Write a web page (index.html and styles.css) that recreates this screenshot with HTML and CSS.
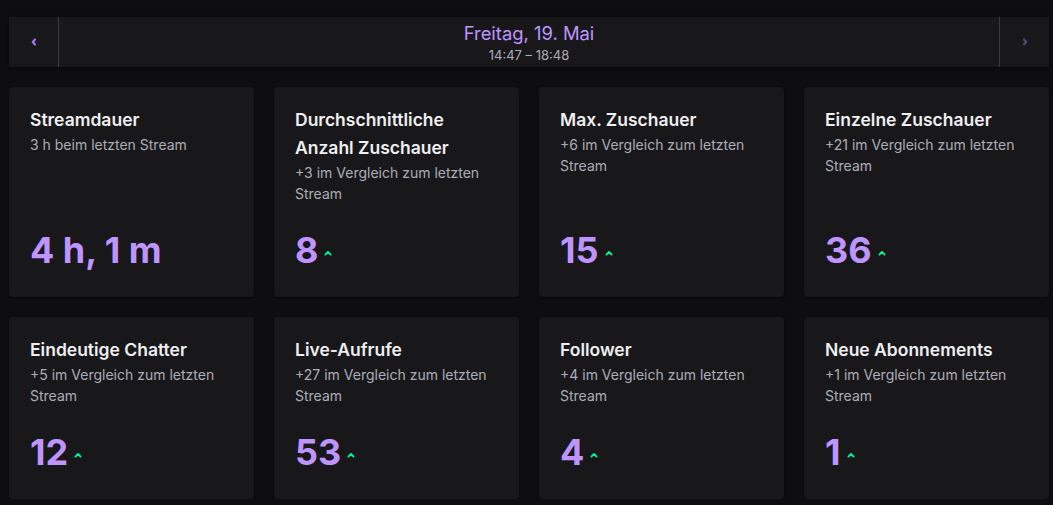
FILE: index.html
```html
<!DOCTYPE html>
<html lang="de">
<head>
<meta charset="utf-8">
<link rel="stylesheet" href="styles.css">
</head>
<body>
<div class="page">
  <div class="datebar">
    <button class="nav nav-prev" aria-label="Zurück">
      <svg width="10" height="10" viewBox="0 0 10 10"><path d="M6 2.6 L3.8 5 L6 7.4" fill="none" stroke="currentColor" stroke-width="2.2" stroke-linecap="round" stroke-linejoin="round"/></svg>
    </button>
    <div class="date">
      <div class="date-title">Freitag, 19. Mai</div>
      <div class="date-time">14:47 – 18:48</div>
    </div>
    <button class="nav nav-next" aria-label="Weiter">
      <svg width="10" height="10" viewBox="0 0 10 10"><path d="M4 2.6 L6.2 5 L4 7.4" fill="none" stroke="currentColor" stroke-width="2.2" stroke-linecap="round" stroke-linejoin="round"/></svg>
    </button>
  </div>

  <div class="grid">
    <div class="card">
      <div class="card-title">Streamdauer</div>
      <div class="card-sub">3 h beim letzten Stream</div>
      <div class="card-value"><span class="num">4 h, 1 m</span></div>
    </div>
    <div class="card">
      <div class="card-title">Durchschnittliche Anzahl Zuschauer</div>
      <div class="card-sub">+3 im Vergleich zum letzten Stream</div>
      <div class="card-value"><span class="num">8</span><svg class="up" width="10" height="8" viewBox="0 0 10 8"><path d="M2.4 5.6 L5 3 L7.6 5.6" fill="none" stroke="currentColor" stroke-width="1.9" stroke-linecap="round" stroke-linejoin="round"/></svg></div>
    </div>
    <div class="card">
      <div class="card-title">Max. Zuschauer</div>
      <div class="card-sub">+6 im Vergleich zum letzten Stream</div>
      <div class="card-value"><span class="num">15</span><svg class="up" width="10" height="8" viewBox="0 0 10 8"><path d="M2.4 5.6 L5 3 L7.6 5.6" fill="none" stroke="currentColor" stroke-width="1.9" stroke-linecap="round" stroke-linejoin="round"/></svg></div>
    </div>
    <div class="card">
      <div class="card-title">Einzelne Zuschauer</div>
      <div class="card-sub">+21 im Vergleich zum letzten Stream</div>
      <div class="card-value"><span class="num">36</span><svg class="up" width="10" height="8" viewBox="0 0 10 8"><path d="M2.4 5.6 L5 3 L7.6 5.6" fill="none" stroke="currentColor" stroke-width="1.9" stroke-linecap="round" stroke-linejoin="round"/></svg></div>
    </div>
    <div class="card">
      <div class="card-title">Eindeutige Chatter</div>
      <div class="card-sub">+5 im Vergleich zum letzten Stream</div>
      <div class="card-value"><span class="num">12</span><svg class="up" width="10" height="8" viewBox="0 0 10 8"><path d="M2.4 5.6 L5 3 L7.6 5.6" fill="none" stroke="currentColor" stroke-width="1.9" stroke-linecap="round" stroke-linejoin="round"/></svg></div>
    </div>
    <div class="card">
      <div class="card-title">Live-Aufrufe</div>
      <div class="card-sub">+27 im Vergleich zum letzten Stream</div>
      <div class="card-value"><span class="num">53</span><svg class="up" width="10" height="8" viewBox="0 0 10 8"><path d="M2.4 5.6 L5 3 L7.6 5.6" fill="none" stroke="currentColor" stroke-width="1.9" stroke-linecap="round" stroke-linejoin="round"/></svg></div>
    </div>
    <div class="card">
      <div class="card-title">Follower</div>
      <div class="card-sub">+4 im Vergleich zum letzten Stream</div>
      <div class="card-value"><span class="num">4</span><svg class="up" width="10" height="8" viewBox="0 0 10 8"><path d="M2.4 5.6 L5 3 L7.6 5.6" fill="none" stroke="currentColor" stroke-width="1.9" stroke-linecap="round" stroke-linejoin="round"/></svg></div>
    </div>
    <div class="card">
      <div class="card-title">Neue Abonnements</div>
      <div class="card-sub">+1 im Vergleich zum letzten Stream</div>
      <div class="card-value"><span class="num">1</span><svg class="up" width="10" height="8" viewBox="0 0 10 8"><path d="M2.4 5.6 L5 3 L7.6 5.6" fill="none" stroke="currentColor" stroke-width="1.9" stroke-linecap="round" stroke-linejoin="round"/></svg></div>
    </div>
  </div>
</div>
</body>
</html>
```

FILE: styles.css
```css
* { box-sizing: border-box; }
html, body {
  margin: 0;
  background: #0e0e10;
  font-family: Inter, "Noto Sans", "Liberation Sans", sans-serif;
  color: #efeff1;
  overflow: hidden;
}
.page {
  padding: 17px 4px 0 9px;
  display: flex;
  flex-direction: column;
  gap: 20px;
}
.datebar {
  height: 50px;
  background: #18181b;
  display: flex;
  align-items: stretch;
  box-shadow: 0 1px 3px rgba(0,0,0,0.6);
}
.nav {
  width: 50px;
  border: none;
  background: transparent;
  padding: 0;
  display: flex;
  align-items: center;
  justify-content: center;
  cursor: pointer;
}
.nav-prev {
  color: #a970ff;
  border-right: 1px solid #3a3a3d;
}
.nav-next {
  color: #54457a;
  border-left: 1px solid #3a3a3d;
}
.date {
  flex: 1;
  display: flex;
  flex-direction: column;
  align-items: center;
  justify-content: center;
  gap: 3px;
}
.date-title {
  color: #bf94ff;
  font-size: 18.4px;
  line-height: 22px;
}
.date-time {
  color: #adadb8;
  font-size: 13px;
  line-height: 16px;
}
.grid {
  display: grid;
  grid-template-columns: repeat(4, 245px);
  column-gap: 20px;
  row-gap: 20px;
}
.card {
  background: #18181b;
  border-radius: 4px;
  padding: 19px 20px 24px 21px;
  display: flex;
  flex-direction: column;
  box-shadow: 0 1px 3px rgba(0,0,0,0.5);
}
.card-title {
  font-size: 17.5px;
  font-weight: 600;
  line-height: 28px;
  color: #efeff1;
}
.card-sub {
  font-size: 14px;
  line-height: 21px;
  color: #adadb8;
}
.card-value {
  margin-top: auto;
  padding-top: 24px;
  display: flex;
  align-items: center;
  gap: 5px;
}
.num {
  font-size: 36px;
  font-weight: 700;
  line-height: 45px;
  color: #bf94ff;
}
.up {
  color: #00f593;
  margin-top: 5px;
}
```
